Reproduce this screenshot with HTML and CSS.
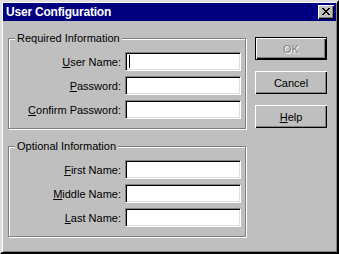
FILE: index.html
```html
<!DOCTYPE html>
<html lang="en">
<head>
    <meta charset="UTF-8">
    <meta name="viewport" content="width=device-width, initial-scale=1.0">
    <title>User Configuration</title>
    <link rel="stylesheet" href="styles.css">
</head>
<body>
    <div class="window">
        <div class="titlebar">
            <span class="title">User Configuration</span>
            <div class="close-btn">
                <svg width="8" height="7" viewBox="0 0 8 7">
                    <path d="M0 0h2v1h1v1h2v-1h1v-1h2v1h-1v1h-1v1h-1v1h1v1h1v1h1v1h-2v-1h-1v-1h-2v1h-1v1h-2v-1h1v-1h1v-1h1v-1h-1v-1h-1v-1h-1z" fill="#000"/>
                </svg>
            </div>
        </div>

        <div class="content">
            <div class="groups">
                <!-- Required Information -->
                <div class="group">
                    <span class="legend">Required Information</span>
                    <label class="field-label"><u>U</u>ser Name:</label>
                    <div class="field"><span class="caret"></span></div>
                    <label class="field-label"><u>P</u>assword:</label>
                    <div class="field"></div>
                    <label class="field-label"><u>C</u>onfirm Password:</label>
                    <div class="field"></div>
                </div>

                <!-- Optional Information -->
                <div class="group">
                    <span class="legend">Optional Information</span>
                    <label class="field-label"><u>F</u>irst Name:</label>
                    <div class="field"></div>
                    <label class="field-label"><u>M</u>iddle Name:</label>
                    <div class="field"></div>
                    <label class="field-label"><u>L</u>ast Name:</label>
                    <div class="field"></div>
                </div>
            </div>

            <div class="buttons">
                <button class="btn default" disabled>OK</button>
                <button class="btn">Cancel</button>
                <button class="btn"><u>H</u>elp</button>
            </div>
        </div>
    </div>
</body>
</html>
```

FILE: styles.css
```css
/* Basic Reset */
* {
    margin: 0;
    padding: 0;
    box-sizing: border-box;
}

body {
    font-family: 'Liberation Sans', Arial, sans-serif;
    font-size: 11px;
    color: #000;
    background-color: #bfbfbf;
}

/* Window frame */
.window {
    width: 339px;
    height: 254px;
    padding: 1px;
    background-color: #bfbfbf;
    border: 2px solid;
    border-color: #dfdfdf #000 #000 #dfdfdf;
    box-shadow: inset 1px 1px #fff, inset -1px -1px #808080;
}

.titlebar {
    height: 18px;
    background-color: #000080;
    display: flex;
    align-items: center;
    justify-content: space-between;
    padding: 0 2px 0 3px;
}

.title {
    color: #fff;
    font-weight: bold;
    font-size: 12px;
    letter-spacing: -0.2px;
}

.close-btn {
    width: 16px;
    height: 14px;
    background-color: #bfbfbf;
    box-shadow: inset 1px 1px #fff, inset -1px -1px #000, inset -2px -2px #808080;
    display: flex;
    align-items: center;
    justify-content: center;
    padding: 0 1px 1px 0;
}

.close-btn svg {
    display: block;
}

/* Layout */
.content {
    display: flex;
    padding: 16px 0 0 5px;
}

.groups {
    width: 239px;
    padding-top: 1px;
}

/* Group boxes */
.group {
    position: relative;
    width: 238px;
    border: 1px solid #808080;
    box-shadow: 1px 1px #fff, inset 1px 1px #fff;
    padding: 13px 4px 9px 4px;
    display: grid;
    grid-template-columns: 1fr 116px;
    column-gap: 4px;
    row-gap: 5px;
    align-items: center;
}

.group + .group {
    margin-top: 17px;
}

.legend {
    position: absolute;
    top: -7px;
    left: 6px;
    padding: 0 2px 0 2px;
    background-color: #bfbfbf;
    line-height: 13px;
}

.field-label {
    text-align: right;
    white-space: nowrap;
}

.field {
    height: 19px;
    background-color: #fff;
    border: 1px solid;
    border-color: #808080 #fff #fff #808080;
    box-shadow: inset 1px 1px #000, inset -1px -1px #dfdfdf;
    display: flex;
    align-items: center;
    padding-left: 3px;
}

.caret {
    width: 1px;
    height: 13px;
    background-color: #000;
}

/* Buttons */
.buttons {
    display: flex;
    flex-direction: column;
    gap: 11px;
    margin-left: 8px;
}

.btn {
    width: 72px;
    height: 23px;
    font-family: inherit;
    font-size: 11px;
    color: #000;
    background-color: #bfbfbf;
    border: none;
    box-shadow: inset 1px 1px #fff, inset -1px -1px #000, inset -2px -2px #808080;
}

.btn.default {
    border: 1px solid #000;
}

.btn:disabled {
    color: #808080;
    text-shadow: 1px 1px #fff;
}
```
